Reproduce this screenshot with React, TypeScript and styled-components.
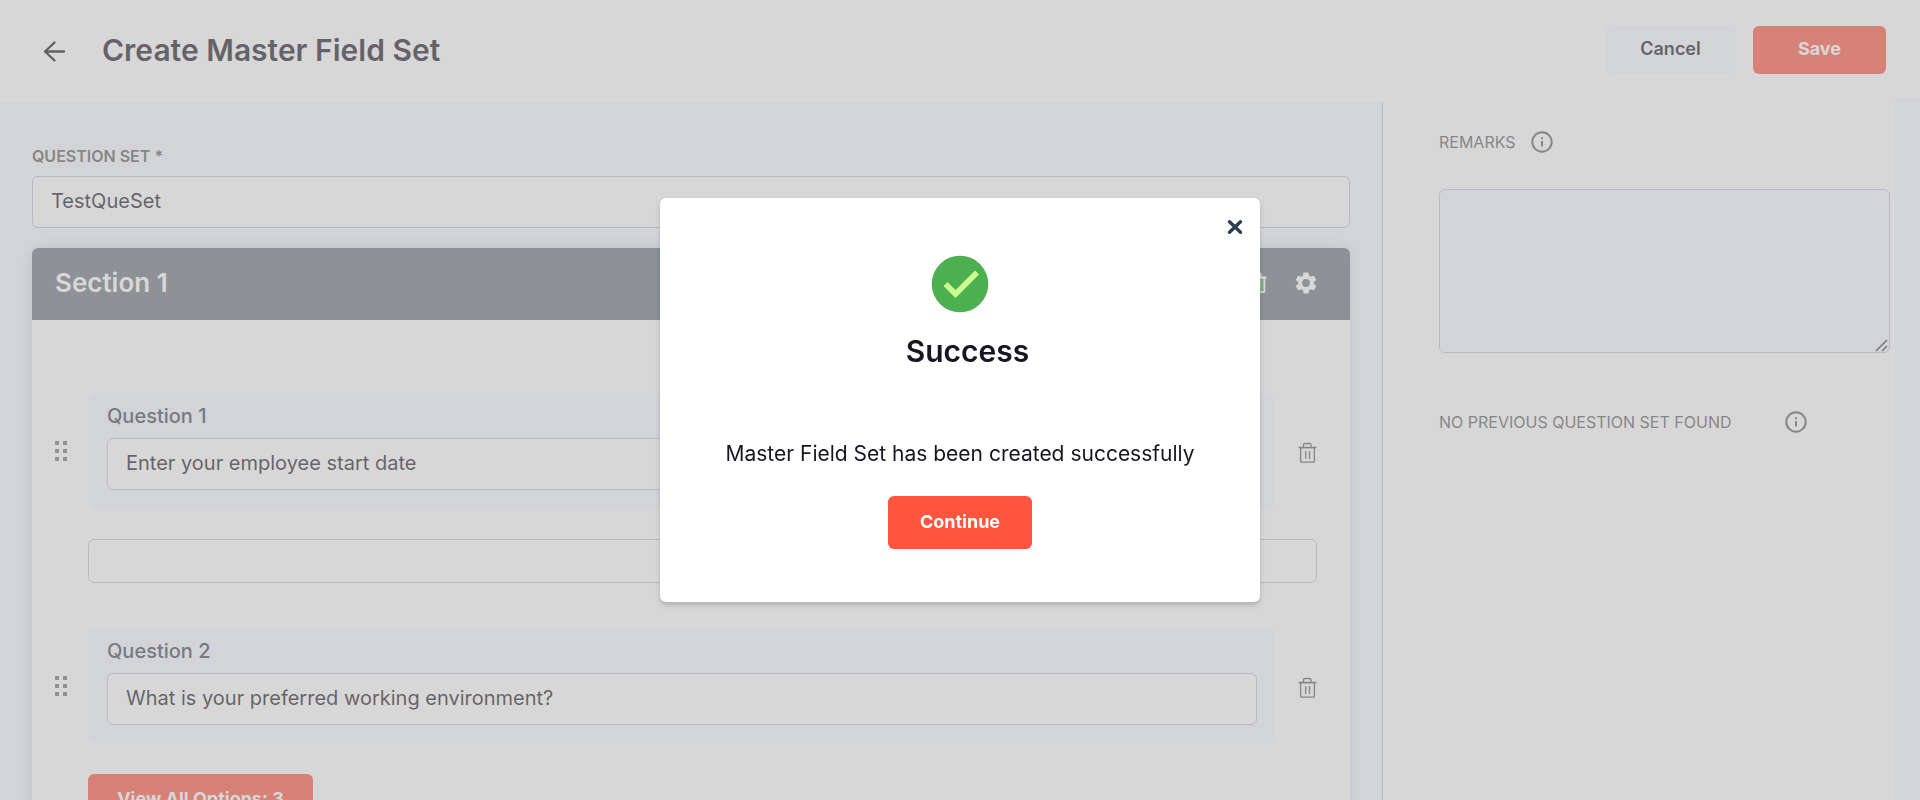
import React from "react";
import styled, { createGlobalStyle } from "styled-components";

const color = {
  page: "#f7f9ff",
  border: "#bdc5d5",
  ink: "#1a1523",
  label: "#5d5d5d",
  slate: "#6d737b",
  accent: "#ff543e",
};

const GlobalStyle = createGlobalStyle`
  *, *::before, *::after { box-sizing: border-box; }
  html, body { margin: 0; }
  body, button, input, textarea {
    font-family: Inter, "Liberation Sans", sans-serif;
    color: ${color.ink};
  }
`;

const Page = styled.div`
  height: 100vh;
  overflow: hidden;
  display: flex;
  flex-direction: column;
  background: ${color.page};
`;

const Header = styled.header`
  flex: none;
  height: 98px;
  display: flex;
  align-items: flex-start;
  gap: 36px;
  padding: 26px 34px 0 42px;
  background: #fff;
`;

const Title = styled.h1`
  flex: 1;
  margin: 0;
  font-size: 30px;
  line-height: 48px;
  font-weight: 600;
`;

const HeaderActions = styled.div`
  display: flex;
  gap: 17px;
`;

const Button = styled.button<{ $variant?: "soft"; $width?: number; $height?: number }>`
  width: ${(p) => p.$width ?? 133}px;
  height: ${(p) => p.$height ?? 48}px;
  padding: 0 0 2px;
  border: 0;
  border-radius: 6px;
  font-size: 18px;
  line-height: 24px;
  font-weight: ${(p) => (p.$variant === "soft" ? 600 : 700)};
  color: ${(p) => (p.$variant === "soft" ? color.ink : "#fff")};
  background: ${(p) => (p.$variant === "soft" ? color.page : color.accent)};
`;

const IconButton = styled.button`
  display: flex;
  padding: 0;
  border: 0;
  background: none;
`;

const BackButton = styled(IconButton)`
  height: 48px;
  align-items: center;
`;

const Body = styled.div`
  flex: 1;
  min-height: 0;
  display: flex;
  margin-right: 25px;
  border-top: 4px solid #fff;
`;

const Main = styled.main`
  flex: 1;
  min-width: 0;
  padding: 42px 32px 0;
`;

const FieldLabel = styled.label<{ $strong?: boolean }>`
  font-size: 16px;
  line-height: 24px;
  font-weight: ${(p) => (p.$strong ? 600 : 400)};
  color: ${color.label};
`;

const TextInput = styled.input<{ $compact?: boolean }>`
  display: block;
  width: 100%;
  height: ${(p) => (p.$compact ? 44 : 52)}px;
  padding: 0 18px 2px;
  border: 1px solid ${color.border};
  border-radius: 6px;
  background: #fff;
  font-size: 20px;
`;

const QuestionSet = styled.div`
  display: flex;
  flex-direction: column;
  gap: 8px;
`;

const Card = styled.section`
  margin-top: 20px;
  border-radius: 6px;
  background: #fff;
  box-shadow: 0 0 14px rgba(60, 70, 100, 0.2);
`;

const CardHeader = styled.div`
  height: 72px;
  display: flex;
  align-items: center;
  justify-content: space-between;
  padding: 0 31px 2px 23px;
  border-radius: 6px 6px 0 0;
  background: ${color.slate};
`;

const CardTitle = styled.h2`
  margin: 0;
  font-size: 26px;
  line-height: 32px;
  font-weight: 600;
  color: #fff;
`;

const CardTools = styled.div`
  display: flex;
  align-items: center;
  gap: 26px;
`;

const CardBody = styled.div`
  padding: 73px 33px 120px 23px;
`;

const QuestionRow = styled.div`
  display: flex;
  align-items: center;
`;

const DragHandle = styled.div`
  flex: none;
  width: 33px;
  display: flex;
`;

const QuestionBox = styled.div`
  flex: 1;
  height: 116px;
  display: flex;
  flex-direction: column;
  gap: 10px;
  padding: 11px 18px 0 19px;
  border-radius: 8px;
  background: ${color.page};
`;

const QuestionLabel = styled.label`
  font-size: 20px;
  line-height: 24px;
  font-weight: 500;
  color: #3a4450;
`;

const RowDelete = styled(IconButton)`
  margin-left: 23px;
  padding-top: 4px;
`;

const Indented = styled.div<{ $last?: boolean }>`
  padding: ${(p) => (p.$last ? "30px 0 0 33px" : "30px 0 45px 33px")};
`;

const Aside = styled.aside`
  flex: none;
  width: 513px;
  padding: 28px 5px 0 56px;
  border-left: 1px solid ${color.border};
  background: #fff;
`;

const AsideRow = styled.div<{ $gap: number }>`
  display: flex;
  align-items: center;
  gap: ${(p) => p.$gap}px;
`;

const AsideText = styled.p`
  margin: 0;
  font-size: 16px;
  line-height: 24px;
  color: ${color.label};
`;

const RemarksField = styled.div`
  position: relative;
  margin: 35px 0 57px;
`;

const Remarks = styled.textarea`
  display: block;
  width: 100%;
  height: 164px;
  padding: 12px;
  border: 1px solid ${color.border};
  border-radius: 6px;
  background: ${color.page};
  font-size: 20px;
  resize: none;
`;

const ResizeGrip = styled.svg`
  position: absolute;
  right: 2px;
  bottom: 1px;
`;

const Overlay = styled.div`
  position: fixed;
  inset: 0;
  display: flex;
  align-items: center;
  justify-content: center;
  background: rgba(175, 175, 175, 0.5);
`;

const Dialog = styled.div`
  position: relative;
  width: 600px;
  height: 404px;
  display: flex;
  flex-direction: column;
  align-items: center;
  padding-top: 57px;
  border-radius: 6px;
  background: #fff;
  box-shadow: 0 3px 5px rgba(0, 0, 0, 0.18);
`;

const CloseButton = styled(IconButton)`
  position: absolute;
  top: 21px;
  right: 17px;
`;

const DialogTitle = styled.h2`
  margin: 18px 0 0;
  padding-left: 15px;
  font-size: 30px;
  line-height: 40px;
  font-weight: 600;
`;

const DialogText = styled.p`
  margin: 69px 0 28px;
  font-size: 21px;
  line-height: 28px;
`;

const BackArrow = () => (
  <svg width="24" height="28" viewBox="0 0 24 28" fill="none" stroke="#111" strokeWidth="2.300" strokeLinecap="round" strokeLinejoin="round">
    <path d="M22 15.500H3M12.500 6.500L3 15.500l9.500 9" />
  </svg>
);

const TrashIcon = ({ stroke = color.label, fill = "none" }: { stroke?: string; fill?: string }) => (
  <svg width="19" height="22" viewBox="0 0 19 22" fill="none" stroke={stroke} strokeWidth={fill === "none" ? 1.3 : 1.8}>
    <path d="M2.600 5.600h13.800v13.600a1 1 0 0 1-1 1H3.600a1 1 0 0 1-1-1z" fill={fill} />
    <path d="M0.500 5.500h18M5.500 5.200V3a1.500 1.500 0 0 1 1.500-1.500h4.500A1.500 1.500 0 0 1 13 3v2.200" />
    <path d="M7.700 9v8M11.500 9v8" />
  </svg>
);

const GearIcon = () => (
  <svg width="26" height="26" viewBox="0 0 24 24" fill="#fff">
    <path d="M19.140 12.940c.04-.3.060-.61.060-.94 0-.32-.02-.64-.07-.94l2.030-1.580a.49.490 0 0 0 .12-.61l-1.920-3.320a.49.490 0 0 0-.59-.22l-2.390.96c-.5-.38-1.030-.7-1.620-.94l-.36-2.540a.48.480 0 0 0-.48-.41h-3.840c-.24 0-.43.17-.47.41l-.36 2.540c-.59.24-1.130.57-1.620.94l-2.390-.96a.48.480 0 0 0-.59.22L2.740 8.870c-.12.21-.08.47.12.61l2.030 1.580c-.05.3-.09.63-.09.94s.02.64.07.94l-2.030 1.580a.49.490 0 0 0-.12.61l1.920 3.320c.12.22.37.29.59.22l2.390-.96c.5.38 1.030.7 1.620.94l.36 2.540c.05.24.24.41.48.41h3.840c.24 0 .44-.17.47-.41l.36-2.540c.59-.24 1.130-.56 1.620-.94l2.390.96c.22.080.47 0 .59-.22l1.920-3.320a.48.480 0 0 0-.12-.61zM12 15.600A3.600 3.600 0 1 1 12 8.400a3.600 3.600 0 0 1 0 7.200z" />
  </svg>
);

const DotsIcon = () => (
  <svg width="12" height="20" viewBox="0 0 12 20" fill={color.slate}>
    <path d="M0 0h4v4H0zM8 0h4v4H8zM0 8h4v4H0zM8 8h4v4H8zM0 16h4v4H0zM8 16h4v4H8z" />
  </svg>
);

const InfoIcon = () => (
  <svg width="22" height="22" viewBox="0 0 22 22" fill="none" stroke={color.label}>
    <circle cx="11" cy="11" r="9.700" strokeWidth="2" />
    <path d="M11 10v5.500M11 6.300v1.900" strokeWidth="2" />
  </svg>
);

const SuccessIcon = () => (
  <svg width="58" height="58" viewBox="0 0 58 58">
    <circle cx="29" cy="29" r="28.300" fill="#4caf50" />
    <path d="M14.500 29L24.500 39L46 17.500" fill="none" stroke="#ccff90" strokeWidth="5.600" />
  </svg>
);

const CloseIcon = () => (
  <svg width="16" height="16" viewBox="0 0 16 16" stroke="#2c3e50" strokeWidth="3.400" strokeLinecap="round">
    <path d="M2.500 2.700l11 10.600M13.500 2.700l-11 10.600" />
  </svg>
);

type QuestionProps = { number: number; value: string };

const Question = ({ number, value }: QuestionProps) => (
  <QuestionRow>
    <DragHandle>
      <DotsIcon />
    </DragHandle>
    <QuestionBox>
      <QuestionLabel htmlFor={`question-${number}`}>Question {number}</QuestionLabel>
      <TextInput id={`question-${number}`} defaultValue={value} />
    </QuestionBox>
    <RowDelete type="button" aria-label={`Delete question ${number}`}>
      <TrashIcon />
    </RowDelete>
  </QuestionRow>
);

export default function App() {
  return (
    <>
      <GlobalStyle />
      <Page>
        <Header>
          <BackButton type="button" aria-label="Back">
            <BackArrow />
          </BackButton>
          <Title>Create Master Field Set</Title>
          <HeaderActions>
            <Button type="button" $variant="soft" $width={131}>Cancel</Button>
            <Button type="button">Save</Button>
          </HeaderActions>
        </Header>
        <Body>
          <Main>
            <QuestionSet>
              <FieldLabel htmlFor="question-set" $strong>QUESTION SET *</FieldLabel>
              <TextInput id="question-set" defaultValue="TestQueSet" />
            </QuestionSet>
            <Card>
              <CardHeader>
                <CardTitle>Section 1</CardTitle>
                <CardTools>
                  <IconButton type="button" aria-label="Delete section">
                    <TrashIcon stroke="#fff" fill="#4caf50" />
                  </IconButton>
                  <IconButton type="button" aria-label="Section settings">
                    <GearIcon />
                  </IconButton>
                </CardTools>
              </CardHeader>
              <CardBody>
                <Question number={1} value="Enter your employee start date" />
                <Indented>
                  <TextInput $compact aria-label="Answer 1" />
                </Indented>
                <Question number={2} value="What is your preferred working environment?" />
                <Indented $last>
                  <Button type="button" $width={225} $height={52}>View All Options: 3</Button>
                </Indented>
              </CardBody>
            </Card>
          </Main>
          <Aside>
            <AsideRow $gap={15}>
              <FieldLabel htmlFor="remarks">REMARKS</FieldLabel>
              <InfoIcon />
            </AsideRow>
            <RemarksField>
              <Remarks id="remarks" />
              <ResizeGrip width="13" height="13" viewBox="0 0 13 13" stroke="#44464a" strokeWidth="1.600" aria-hidden="true">
                <path d="M1 12L12 1M7 12L12 7" />
              </ResizeGrip>
            </RemarksField>
            <AsideRow $gap={53}>
              <AsideText>NO PREVIOUS QUESTION SET FOUND</AsideText>
              <InfoIcon />
            </AsideRow>
          </Aside>
        </Body>
      </Page>
      <Overlay>
        <Dialog role="dialog" aria-modal="true" aria-labelledby="dialog-title">
          <CloseButton type="button" aria-label="Close">
            <CloseIcon />
          </CloseButton>
          <SuccessIcon />
          <DialogTitle id="dialog-title">Success</DialogTitle>
          <DialogText>Master Field Set has been created successfully</DialogText>
          <Button type="button" $width={144} $height={53}>Continue</Button>
        </Dialog>
      </Overlay>
    </>
  );
}
